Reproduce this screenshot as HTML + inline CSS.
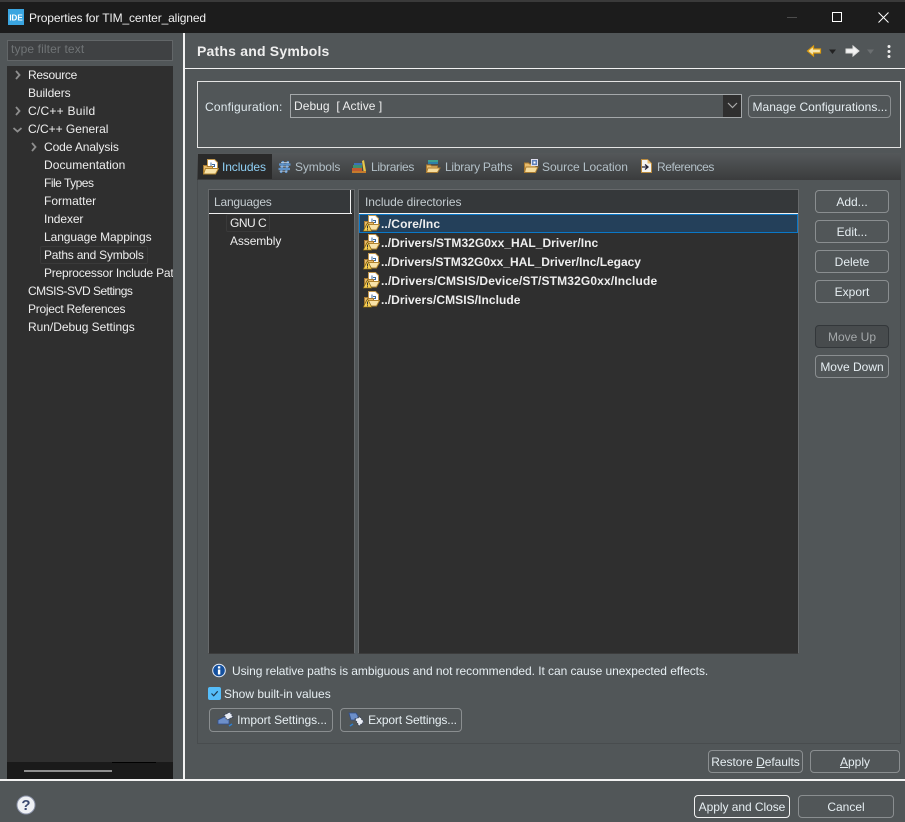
<!DOCTYPE html>
<html lang="en"><head><meta charset="utf-8"><title>Properties for TIM_center_aligned</title>
<style>
html,body{margin:0;padding:0;background:#515658}
#w{position:relative;width:905px;height:822px;overflow:hidden;background:#515658;font:12px/16px "Liberation Sans",sans-serif;color:#eee}
#w div,#w span.t,#w svg.a{position:absolute;box-sizing:border-box}
.t{white-space:nowrap;letter-spacing:-.1px}
.b{border:1px solid #8a8e90;border-radius:4px;text-align:center;line-height:22px;color:#e6eef2;white-space:nowrap}
.tab{color:#b3c0c8}
.row{font-weight:bold;color:#eee;letter-spacing:.14px}
u{text-underline-offset:1px}
</style></head><body>
<div id="w">
<svg width="0" height="0" style="position:absolute"><defs>
<symbol id="inc" viewBox="0 0 16 16">
<path d="M4.500.5h7l3 3v7h-10z" fill="#fff" stroke="#c49a50"/>
<path d="M8 3.500v4h3.500V5.500H9" fill="none" stroke="#3c6a9c" stroke-width="1"/>
<path d="M.5 6.500h3l1 1h5v7H.5z" fill="#e8bc6c" stroke="#a87a30"/>
<path d="M2.500 9.500h13l-3 5.500H.5z" fill="#f8e2a8" stroke="#b0842f"/>
</symbol>
<symbol id="warn" viewBox="0 0 9 9">
<path d="M4.500.3L8.800 8.600H.2z" fill="#f7cf55" stroke="#7d5f10" stroke-width=".7"/>
<path d="M4.500 3v3M4.500 6.800v1" stroke="#333" stroke-width="1"/>
</symbol>
</defs></svg>

<!-- title bar -->
<div style="left:0;top:0;width:905px;height:33px;background:#1c1c1c;border-top:2px solid #3a3a3a"></div>
<svg class="a" style="left:8px;top:9px" width="16" height="16"><rect width="16" height="16" fill="#3aa5e0"/><text x="8" y="11.500" font-family="Liberation Sans" font-weight="bold" font-size="8" fill="#fff" text-anchor="middle">IDE</text></svg>
<span class="t" style="left:29px;top:10px;color:#f0f0f0;letter-spacing:-.13px">Properties for TIM_center_aligned</span>
<div style="left:787px;top:17px;width:10px;height:1px;background:#4c4c4c"></div>
<div style="left:832px;top:12px;width:10px;height:10px;border:1px solid #fff"></div>
<svg class="a" style="left:878px;top:12px" width="11" height="11"><path d="M.5.500l10 10M10.500.500l-10 10" stroke="#fff" fill="none"/></svg>

<!-- separators -->
<div style="left:183px;top:33px;width:2px;height:747px;background:#f2f2f2"></div>
<div style="left:185px;top:68px;width:720px;height:1px;background:#f2f2f2"></div>
<div style="left:0;top:779px;width:905px;height:2px;background:#f2f2f2"></div>

<!-- left side -->
<div style="left:7px;top:40px;width:166px;height:21px;background:#3f4143;border:1px solid #626668"></div>
<span class="t" style="left:11px;top:41px;color:#707476;letter-spacing:.12px">type filter text</span>
<div style="left:7px;top:66px;width:166px;height:713px;background:#2f2f2f"></div>
<div style="left:7px;top:762px;width:166px;height:17px;background:#1a1a1a"></div>
<div style="left:24px;top:770px;width:88px;height:2px;background:#8f8f8f"></div>
<div style="left:112px;top:762px;width:44px;height:1px;background:#000"></div>
<svg class="a" style="left:12px;top:68px" width="170" height="100" fill="none" stroke="#8e8e8e" stroke-width="1.800">
<path d="M4 3l3.500 4L4 11M4 39l3.500 4L4 47M1.500 60l4 3.500 4-3.500M20 75l3.500 4-3.500 4"/></svg>
<div style="left:40px;top:246px;width:108px;height:18px;border:1px solid #3a3a3a;border-radius:2px"></div>
<span class="t" style="left:28px;top:67px;letter-spacing:-.3px">Resource</span>
<span class="t" style="left:28px;top:85px">Builders</span>
<span class="t" style="left:28px;top:103px;letter-spacing:.25px">C/C++ Build</span>
<span class="t" style="left:28px;top:121px;letter-spacing:-.02px">C/C++ General</span>
<span class="t" style="left:44px;top:139px">Code Analysis</span>
<span class="t" style="left:44px;top:157px;letter-spacing:.05px">Documentation</span>
<span class="t" style="left:44px;top:175px;letter-spacing:-.5px">File Types</span>
<span class="t" style="left:44px;top:193px;letter-spacing:.02px">Formatter</span>
<span class="t" style="left:44px;top:211px">Indexer</span>
<span class="t" style="left:44px;top:229px;letter-spacing:-.07px">Language Mappings</span>
<span class="t" style="left:44px;top:247px;letter-spacing:-.22px">Paths and Symbols</span>
<div style="left:44px;top:265px;width:129px;height:16px;overflow:hidden"><span class="t" style="left:0;top:0;letter-spacing:-.22px">Preprocessor Include Paths</span></div>
<span class="t" style="left:28px;top:283px;letter-spacing:-.5px">CMSIS-SVD Settings</span>
<span class="t" style="left:28px;top:301px;letter-spacing:-.27px">Project References</span>
<span class="t" style="left:28px;top:319px;letter-spacing:-.04px">Run/Debug Settings</span>

<!-- header -->
<span class="t" style="left:197px;top:43px;font-size:14px;font-weight:bold;color:#eee;letter-spacing:.2px">Paths and Symbols</span>
<svg class="a" style="left:805px;top:42px" width="90" height="18">
<path d="M2.500 9l6-5v3h7v4h-7v3z" fill="#f6e6b0" stroke="#d99a10" stroke-width="1.200"/>
<path d="M24 7.500h7L27.500 12z" fill="#222"/>
<path d="M54 9l-6-5v3h-7v4h7v3z" fill="#f2f2f2" stroke="#ddd"/>
<path d="M62 7.500h7L65.500 12z" fill="#6b6f71"/>
<circle cx="84" cy="4.500" r="1.500" fill="#eee"/><circle cx="84" cy="9.500" r="1.500" fill="#eee"/><circle cx="84" cy="14.500" r="1.500" fill="#eee"/>
</svg>

<!-- configuration -->
<div style="left:197px;top:81px;width:704px;height:67px;border:1px solid #e4e4e4"></div>
<span class="t" style="left:205px;top:99px;color:#dfe9ee;letter-spacing:.2px">Configuration:</span>
<div style="left:290px;top:94px;width:452px;height:24px;border:1px solid #a4a8aa;background:#515658"></div>
<div style="left:723px;top:95px;width:18px;height:22px;background:#2f2f2f"></div>
<svg class="a" style="left:727px;top:102px" width="11" height="7"><path d="M1 1l4.500 4.500L10 1" fill="none" stroke="#aaa" stroke-width="1.200"/></svg>
<span class="t" style="left:294px;top:98px;white-space:pre;color:#eee;letter-spacing:.05px">Debug  [ Active ]</span>
<div class="b" style="left:748px;top:95px;width:143px;height:23px;letter-spacing:.04px;padding-left:1px">Manage Configurations...</div>

<!-- tabs -->
<div style="left:197px;top:153px;width:704px;height:27px;background:linear-gradient(#54585a,#3b3c3d)"></div>
<div style="left:198px;top:154px;width:74px;height:25px;background:#2a2a2a"></div>
<svg class="a" style="left:203px;top:159px" width="16" height="16"><use href="#inc"/></svg>
<span class="t" style="left:222px;top:159px;color:#8fd0f5">Includes</span>
<svg class="a" style="left:278px;top:160px" width="13" height="14" fill="none" stroke="#5f92c8" stroke-width="2.200"><path d="M5 1L3 13M10 1L8 13M1 4.500h11.500M.5 9h11.500"/><path d="M3 2.500h8M2 6.800h9M1.500 11.200h8" stroke="#c8d8e8" stroke-width=".7"/></svg>
<span class="t tab" style="left:295px;top:159px">Symbols</span>
<svg class="a" style="left:351px;top:158px" width="16" height="16"><path d="M1 13h14v2H1z" fill="#c57b2c"/><path d="M1 10h10v3H1z" fill="#c05a30"/><path d="M2 7h9v3H2z" fill="#3f8f6f"/><path d="M3 5h8v2H3z" fill="#3b70b8"/><path d="M11 3l2-1 2 11h-2.500z" fill="#e8c84a"/></svg>
<span class="t tab" style="left:371px;top:159px;letter-spacing:-.33px">Libraries</span>
<svg class="a" style="left:425px;top:158px" width="16" height="16"><path d="M3 2h10v2H3z" fill="#3f9f8f"/><path d="M3 4h10v2H3z" fill="#2f7fa8"/><path d="M1.500 7h4l1 1h6v6h-11z" fill="#e8bc6c" stroke="#a87a30"/><path d="M3 10h12l-2.500 4.500h-11z" fill="#f6dc9c" stroke="#a87a30"/></svg>
<span class="t tab" style="left:445px;top:159px;letter-spacing:-.26px">Library Paths</span>
<svg class="a" style="left:523px;top:158px" width="16" height="16"><path d="M1.500 5h4l1 1h6v8h-11z" fill="#e8bc6c" stroke="#a87a30"/><path d="M3 9h12l-2.500 5.500h-11z" fill="#f6dc9c" stroke="#a87a30"/><rect x="8.500" y="1.500" width="6" height="6" fill="#5f7fb8" stroke="#dde"/><rect x="10.500" y="3.500" width="2" height="2" fill="#fff"/></svg>
<span class="t tab" style="left:542px;top:159px;letter-spacing:-.06px">Source Location</span>
<svg class="a" style="left:640px;top:158px" width="13" height="16"><path d="M1.500 1.500h6l4 4v9h-10z" fill="#f4f4f0" stroke="#b98a3e"/><path d="M7.500 1.500l4 4h-4z" fill="#e8bc6c"/><path d="M2 9h5M5 6.500l3 2.500-3 2.500" fill="none" stroke="#223" stroke-width="1.300"/></svg>
<span class="t tab" style="left:657px;top:159px;letter-spacing:-.45px">References</span>

<!-- tab body -->
<div style="left:197px;top:180px;width:704px;height:564px;border:1px solid #484c4e;border-top:0"></div>

<!-- languages -->
<div style="left:208px;top:189px;width:147px;height:465px;background:#2f2f2f;border:1px solid #66696b;border-bottom-color:#3c3c3c"></div>
<div style="left:209px;top:190px;width:145px;height:23px;background:#35383a"></div>
<div style="left:209px;top:213px;width:143px;height:1px;background:#f0f0f0"></div>
<div style="left:350px;top:190px;width:1px;height:23px;background:#f0f0f0"></div>
<span class="t" style="left:214px;top:194px;color:#c4ccd0;letter-spacing:-.2px">Languages</span>
<div style="left:226px;top:214px;width:44px;height:18px;border:1px solid #3a3a3a;border-radius:2px"></div>
<span class="t" style="left:230px;top:215px;letter-spacing:-.5px">GNU C</span>
<span class="t" style="left:230px;top:233px">Assembly</span>

<!-- include dirs -->
<div style="left:358px;top:189px;width:441px;height:465px;background:#2f2f2f;border:1px solid #66696b;border-bottom-color:#3c3c3c"></div>
<div style="left:359px;top:190px;width:439px;height:23px;background:#35383a"></div>
<div style="left:359px;top:213px;width:439px;height:1px;background:#f0f0f0"></div>
<span class="t" style="left:365px;top:194px;color:#c4ccd0;letter-spacing:-.05px">Include directories</span>
<div style="left:359px;top:214px;width:439px;height:19px;background:#24405a;border:1px solid #0a78c8"></div>

<svg class="a" style="left:362px;top:214px" width="18" height="100">
<use href="#inc" x="2" y="1" width="16" height="16"/><use href="#warn" x="1" y="8.500" width="9" height="9"/>
<use href="#inc" x="2" y="20" width="16" height="16"/><use href="#warn" x="1" y="27.500" width="9" height="9"/>
<use href="#inc" x="2" y="39" width="16" height="16"/><use href="#warn" x="1" y="46.500" width="9" height="9"/>
<use href="#inc" x="2" y="58" width="16" height="16"/><use href="#warn" x="1" y="65.500" width="9" height="9"/>
<use href="#inc" x="2" y="77" width="16" height="16"/><use href="#warn" x="1" y="84.500" width="9" height="9"/>
</svg>
<span class="t row" style="left:381px;top:216px;letter-spacing:.1px">../Core/Inc</span>
<span class="t row" style="left:381px;top:235px;letter-spacing:.03px">../Drivers/STM32G0xx_HAL_Driver/Inc</span>
<span class="t row" style="left:381px;top:254px;letter-spacing:-.02px">../Drivers/STM32G0xx_HAL_Driver/Inc/Legacy</span>
<span class="t row" style="left:381px;top:273px">../Drivers/CMSIS/Device/ST/STM32G0xx/Include</span>
<span class="t row" style="left:381px;top:292px;letter-spacing:.06px">../Drivers/CMSIS/Include</span>

<!-- side buttons -->
<div class="b" style="left:815px;top:190px;width:74px;height:23px">Add...</div>
<div class="b" style="left:815px;top:220px;width:74px;height:23px">Edit...</div>
<div class="b" style="left:815px;top:250px;width:74px;height:23px">Delete</div>
<div class="b" style="left:815px;top:280px;width:74px;height:23px">Export</div>
<div class="b" style="left:815px;top:325px;width:74px;height:23px;background:#474b4d;border-color:#33373a;color:#a4a8aa">Move Up</div>
<div class="b" style="left:815px;top:355px;width:74px;height:23px">Move Down</div>

<!-- info -->
<svg class="a" style="left:212px;top:663px" width="14" height="15"><circle cx="7" cy="7.500" r="6.300" fill="#14509e" stroke="#e8eef8" stroke-width="1"/><rect x="5.900" y="6.500" width="2.400" height="5" fill="#fff"/><rect x="5.900" y="3.300" width="2.400" height="2.200" fill="#fff"/></svg>
<span class="t" style="left:232px;top:663px;color:#e6eef2;letter-spacing:-.06px">Using relative paths is ambiguous and not recommended. It can cause unexpected effects.</span>
<div style="left:208px;top:687px;width:13px;height:13px;background:#55bdfa;border-radius:2px"></div>
<svg class="a" style="left:208px;top:687px" width="13" height="13"><path d="M3.500 6.500l2.200 2.300 4-4.500" fill="none" stroke="#1e3a52" stroke-width="1.200"/></svg>
<span class="t" style="left:224px;top:686px;color:#e6eef2;letter-spacing:0">Show built-in values</span>

<div class="b" style="left:209px;top:708px;width:124px;height:24px;padding-left:22px;letter-spacing:-.05px">Import Settings...</div>
<svg class="a" style="left:217px;top:712px" width="17" height="16"><path d="M1 8l6-3 5 1v6H1z" fill="#6d8fc9" stroke="#2f4f8f" stroke-width=".8"/><path d="M7 3l6-3 3 5-6 3z" fill="#e8ecf4" stroke="#3a4458" stroke-width="1" stroke-dasharray="1.500 1"/><path d="M12 14l3-2" stroke="#2f7fd0" stroke-width="1.500"/></svg>
<div class="b" style="left:340px;top:708px;width:122px;height:24px;padding-left:23px;letter-spacing:-.15px">Export Settings...</div>
<svg class="a" style="left:348px;top:712px" width="17" height="16"><path d="M1 1h7l2 3v4H3z" fill="#6d8fc9" stroke="#2f4f8f" stroke-width=".8"/><path d="M7 7l5-2 4 5-5 4z" fill="#e8ecf4" stroke="#3a4458" stroke-width="1" stroke-dasharray="1.500 1"/><path d="M2 14l3-2" stroke="#2f7fd0" stroke-width="1.500"/></svg>

<!-- bottom buttons -->
<div class="b" style="left:708px;top:750px;width:95px;height:23px;letter-spacing:-.06px">Restore <u>D</u>efaults</div>
<div class="b" style="left:810px;top:750px;width:90px;height:23px"><u>A</u>pply</div>
<div class="b" style="left:694px;top:795px;width:96px;height:23px;border-color:#f2f2f2;letter-spacing:-.05px">Apply and Close</div>
<div class="b" style="left:798px;top:795px;width:96px;height:23px">Cancel</div>
<svg class="a" style="left:16px;top:795px" width="20" height="20"><circle cx="10" cy="10" r="9" fill="#eef0f4" stroke="#8a92a8"/><text x="10" y="15" font-family="Liberation Sans" font-weight="bold" font-size="15" fill="#3c4a70" text-anchor="middle">?</text></svg>
</div>
</body></html>
